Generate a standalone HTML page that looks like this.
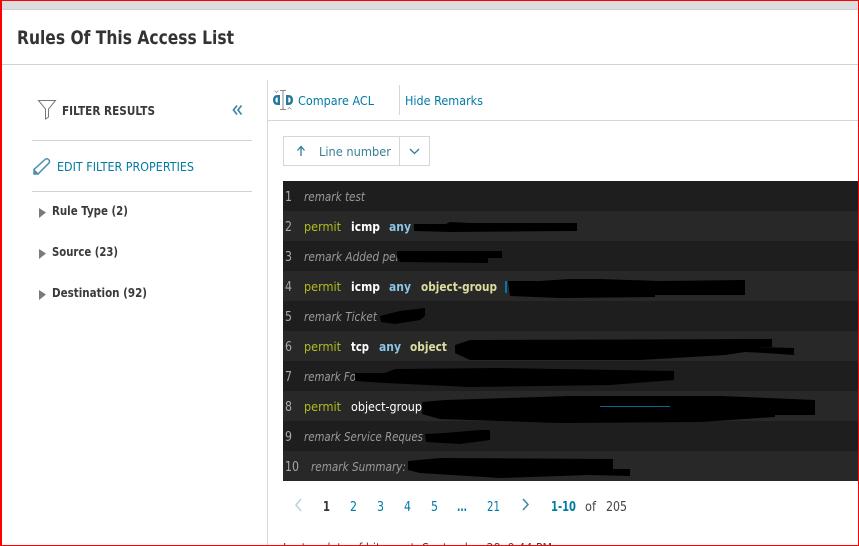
<!DOCTYPE html>
<html><head><meta charset="utf-8"><style>
html,body{margin:0;padding:0;background:#fff;width:859px;height:546px;overflow:hidden}
svg{display:block}
text{font-family:"DejaVu Sans","Liberation Sans",sans-serif;font-size:12px}
.b{font-weight:bold}
.t{fill:#007ba3}
.pg{fill:#007ba3;font-size:13px}
.n{fill:#a8a8a8;font-size:13px}
.r{fill:#9a9a9a;font-style:italic}
.p{fill:#b3bc1e}
.w{fill:#fff;font-weight:bold}
.a{fill:#8cc4e4;font-weight:bold}
.o{fill:#dcdca0;font-weight:bold}
</style></head><body>
<svg width="859" height="546" viewBox="0 0 859 546" xmlns="http://www.w3.org/2000/svg">
<rect width="859" height="546" fill="#fff"/>
<rect x="0" y="0" width="859" height="10" fill="#dcddde"/>
<rect x="0" y="9" width="859" height="1" fill="#cfcfcf"/>
<text x="17" y="44" class="b" style="font-size:19px" fill="#333" textLength="217" lengthAdjust="spacingAndGlyphs">Rules Of This Access List</text>
<rect x="2" y="64" width="857" height="1" fill="#d2d2d2"/>
<rect x="267" y="80" width="1" height="466" fill="#d6d6d6"/>
<rect x="268" y="120" width="591" height="1" fill="#d6d6d6"/>
<rect x="32" y="140" width="220" height="1" fill="#d2d2d2"/>
<rect x="32" y="191" width="220" height="1" fill="#d2d2d2"/>

<path d="M38.500 100.500H55.500L48.500 109V117L45.500 119V109Z" fill="none" stroke="#777" stroke-width="1"/>
<text x="62" y="115" class="b" fill="#3a3a3a" textLength="93" lengthAdjust="spacingAndGlyphs">FILTER RESULTS</text>
<path d="M237 105.500L233.500 110L237 114.500M241.500 105.500L238 110L241.500 114.500" fill="none" stroke="#3f86a6" stroke-width="1.700"/>

<path d="M34 174V169.500L45 159.500C46 158.600 47.400 158.600 48.600 159.600C49.800 160.800 49.800 162.200 48.800 163.200L38 174Z" fill="none" stroke="#4b8dab" stroke-width="1.500"/>
<path d="M33.500 174.500V168.500L39.500 174.500Z" fill="#4b8dab"/>
<text x="57" y="171" class="t" textLength="137" lengthAdjust="spacingAndGlyphs">EDIT FILTER PROPERTIES</text>

<path d="M39 208L46 212.500L39 218Z" fill="#7a7a7a"/>
<path d="M39 249L46 253.500L39 259Z" fill="#7a7a7a"/>
<path d="M39 290L46 294.500L39 300Z" fill="#7a7a7a"/>
<text x="52" y="215" class="b" fill="#3a3a3a" textLength="76" lengthAdjust="spacingAndGlyphs">Rule Type (2)</text>
<text x="52" y="256" class="b" fill="#3a3a3a" textLength="66" lengthAdjust="spacingAndGlyphs">Source (23)</text>
<text x="52" y="297" class="b" fill="#3a3a3a" textLength="95" lengthAdjust="spacingAndGlyphs">Destination (92)</text>

<path d="M280 90.500H286M283 90.500V109.500M280 109.500H286" fill="none" stroke="#888" stroke-width="1"/>
<path d="M274.500 90.500L276.500 92.500L278.500 90.500M287.500 109.500L289.500 107.500L291.500 109.500" fill="none" stroke="#999" stroke-width=".8"/>
<path d="M280 95H277.500C274.500 95 273 97 273 100C273 103 274.500 105 277.500 105H280Z" fill="#26799b"/>
<path d="M277.700 97.500H277C275.800 97.500 275.500 98.500 275.500 100C275.500 101.500 275.800 102.500 277 102.500H277.700Z" fill="#fff"/>
<path d="M286 95H288.500C291.500 95 293 97 293 100C293 103 291.500 105 288.500 105H286Z" fill="#26799b"/>
<path d="M288.300 97.500H289C290.200 97.500 290.500 98.500 290.500 100C290.500 101.500 290.200 102.500 289 102.500H288.300Z" fill="#fff"/>
<text x="298" y="105" class="t" textLength="76" lengthAdjust="spacingAndGlyphs">Compare ACL</text>
<rect x="399" y="85" width="1" height="30" fill="#d6d6d6"/>
<text x="405" y="105" class="t" textLength="78" lengthAdjust="spacingAndGlyphs">Hide Remarks</text>

<rect x="283.500" y="136.500" width="146" height="29" fill="#fff" stroke="#d6d6d6"/>
<rect x="399" y="137" width="1" height="28" fill="#d6d6d6"/>
<path d="M301 156V147M297.500 150.500L301 146.500L304.500 150.500" fill="none" stroke="#2f7d9c" stroke-width="1.300"/>
<text x="319" y="156" fill="#3a7f99" textLength="72" lengthAdjust="spacingAndGlyphs">Line number</text>
<path d="M410 149L414.500 153.500L419 149" fill="none" stroke="#2f7d9c" stroke-width="1.300"/>

<rect x="283" y="181" width="575" height="30" fill="#1e1e1e"/>
<rect x="283" y="211" width="575" height="30" fill="#282828"/>
<rect x="283" y="241" width="575" height="30" fill="#1e1e1e"/>
<rect x="283" y="271" width="575" height="30" fill="#282828"/>
<rect x="283" y="301" width="575" height="30" fill="#1e1e1e"/>
<rect x="283" y="331" width="575" height="30" fill="#282828"/>
<rect x="283" y="361" width="575" height="30" fill="#1e1e1e"/>
<rect x="283" y="391" width="575" height="30" fill="#282828"/>
<rect x="283" y="421" width="575" height="30" fill="#1e1e1e"/>
<rect x="283" y="451" width="575" height="30" fill="#282828"/>

<text x="285" y="201" class="n" textLength="7" lengthAdjust="spacingAndGlyphs">1</text>
<text x="285" y="231" class="n" textLength="7" lengthAdjust="spacingAndGlyphs">2</text>
<text x="285" y="261" class="n" textLength="7" lengthAdjust="spacingAndGlyphs">3</text>
<text x="285" y="291" class="n" textLength="7" lengthAdjust="spacingAndGlyphs">4</text>
<text x="285" y="321" class="n" textLength="7" lengthAdjust="spacingAndGlyphs">5</text>
<text x="285" y="351" class="n" textLength="7" lengthAdjust="spacingAndGlyphs">6</text>
<text x="285" y="381" class="n" textLength="7" lengthAdjust="spacingAndGlyphs">7</text>
<text x="285" y="411" class="n" textLength="7" lengthAdjust="spacingAndGlyphs">8</text>
<text x="285" y="441" class="n" textLength="7" lengthAdjust="spacingAndGlyphs">9</text>
<text x="285" y="471" class="n" textLength="14" lengthAdjust="spacingAndGlyphs">10</text>

<text x="304" y="201" class="r" textLength="61" lengthAdjust="spacingAndGlyphs">remark test</text>
<text x="304" y="261" class="r" textLength="96" lengthAdjust="spacingAndGlyphs">remark Added per</text>
<text x="304" y="321" class="r" textLength="73" lengthAdjust="spacingAndGlyphs">remark Ticket</text>
<text x="304" y="381" class="r" textLength="52" lengthAdjust="spacingAndGlyphs">remark Fo</text>
<text x="304" y="441" class="r" textLength="119" lengthAdjust="spacingAndGlyphs">remark Service Reques</text>
<text x="311" y="471" class="r" textLength="95" lengthAdjust="spacingAndGlyphs">remark Summary:</text>

<text x="304" y="231" class="p" textLength="37" lengthAdjust="spacingAndGlyphs">permit</text>
<text x="351" y="231" class="w" textLength="29" lengthAdjust="spacingAndGlyphs">icmp</text>
<text x="389" y="231" class="a" textLength="22" lengthAdjust="spacingAndGlyphs">any</text>

<text x="304" y="291" class="p" textLength="37" lengthAdjust="spacingAndGlyphs">permit</text>
<text x="351" y="291" class="w" textLength="29" lengthAdjust="spacingAndGlyphs">icmp</text>
<text x="389" y="291" class="a" textLength="22" lengthAdjust="spacingAndGlyphs">any</text>
<text x="421" y="291" class="o" textLength="76" lengthAdjust="spacingAndGlyphs">object-group</text>

<text x="304" y="351" class="p" textLength="37" lengthAdjust="spacingAndGlyphs">permit</text>
<text x="351" y="351" class="w" textLength="18" lengthAdjust="spacingAndGlyphs">tcp</text>
<text x="379" y="351" class="a" textLength="22" lengthAdjust="spacingAndGlyphs">any</text>
<text x="410" y="351" class="o" textLength="37" lengthAdjust="spacingAndGlyphs">object</text>

<text x="304" y="411" class="p" textLength="37" lengthAdjust="spacingAndGlyphs">permit</text>
<text x="351" y="411" fill="#fff" textLength="71" lengthAdjust="spacingAndGlyphs">object-group</text>

<path d="M506 281V293" fill="none" stroke="#0078a8" stroke-width="2"/>
<path d="M456 352H480M560 352H640" fill="none" stroke="#0a5a78" stroke-width="1"/>
<g fill="#000">
<path d="M414 224L446 224L450 222L470 223L577 223V231H570L450 232L414 231Z"/>
<path d="M397 251H502V258H488V263L400 262L397 258Z"/>
<path d="M508 281H540L570 279L600 279L660 281L745 280V295H655V297L560 298L510 296Z"/>
<path d="M380 316L400 311L425 308V316L420 320L395 324L381 322Z"/>
<path d="M455 345L470 340L772 339V347L755 347L794 348V355L765 353L745 352L725 355L640 360L470 360L455 353Z"/>
<path d="M355 373H385L395 369L500 368L674 371V380L610 385L470 387L385 383L355 381Z"/>
<path d="M422 402L445 400L570 396L720 396L815 400V413V415H775V417L700 422L560 423L440 419L422 414Z"/>
<path d="M425 434L445 433L480 430L490 430V440L460 444L426 442Z"/>
<path d="M408 461L440 458L613 459V469H630V476L590 475L500 478L420 473L408 470Z"/>
</g>
<path d="M600 406.500H670" fill="none" stroke="#0a6a8c" stroke-width="1"/>

<path d="M301 499L296 505L301 511" fill="none" stroke="#b4d2dc" stroke-width="1.500"/>
<text x="323" y="511" class="b" fill="#333" style="font-size:13px" textLength="7" lengthAdjust="spacingAndGlyphs">1</text>
<text x="350" y="511" class="pg" textLength="7" lengthAdjust="spacingAndGlyphs">2</text>
<text x="377" y="511" class="pg" textLength="7" lengthAdjust="spacingAndGlyphs">3</text>
<text x="404" y="511" class="pg" textLength="7" lengthAdjust="spacingAndGlyphs">4</text>
<text x="431" y="511" class="pg" textLength="7" lengthAdjust="spacingAndGlyphs">5</text>
<text x="457" y="511" class="pg b" textLength="10" lengthAdjust="spacingAndGlyphs">...</text>
<text x="487" y="511" class="pg" textLength="13" lengthAdjust="spacingAndGlyphs">21</text>
<path d="M523 499L528 504.500L523 510" fill="none" stroke="#3f86a6" stroke-width="1.500"/>
<text x="551" y="511" class="pg b" textLength="25" lengthAdjust="spacingAndGlyphs">1-10</text>
<text x="585" y="511" fill="#444" style="font-size:13px" textLength="11" lengthAdjust="spacingAndGlyphs">of</text>
<text x="606" y="511" fill="#444" style="font-size:13px" textLength="21" lengthAdjust="spacingAndGlyphs">205</text>

<text x="283" y="552" fill="#444" textLength="269" lengthAdjust="spacingAndGlyphs">Last update of hit count: September 28, 9:44 PM</text>

<rect x="0" y="0" width="859" height="1" fill="#ff0000"/>
<rect x="0" y="0" width="2" height="546" fill="#ff0000"/>
<rect x="858" y="0" width="1" height="546" fill="#ff0000"/>
<rect x="0" y="545" width="859" height="1" fill="#ff0000"/>
</svg>
</body></html>
